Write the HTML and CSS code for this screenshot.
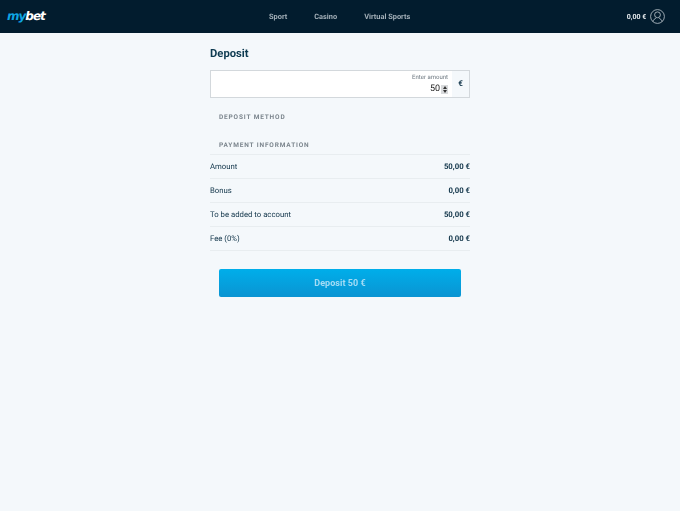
FILE: index.html
```html
<!DOCTYPE html>
<html lang="en">
<head>
<meta charset="UTF-8" />
<meta name="viewport" content="width=device-width, initial-scale=1.0" />
<title>mybet - Deposit</title>
<link rel="stylesheet" href="styles.css">
</head>
<body>
    <header class="topbar">
        <div class="logo"><span class="logo-my">my</span><span class="logo-bet">bet</span></div>
        <nav class="nav">
            <a>Sport</a>
            <a>Casino</a>
            <a>Virtual Sports</a>
        </nav>
        <div class="account">
            <span class="balance">0,00 €</span>
            <svg class="user-icon" width="15" height="15" viewBox="0 0 15 15" fill="none" stroke="#c3ccd2" stroke-width="0.8">
                <circle cx="7.5" cy="7.5" r="6.9"/>
                <circle cx="7.5" cy="5.8" r="2.9"/>
                <path d="M2.9 12.6c.5-2 2-3 3.3-3.5M12.1 12.6c-.5-2-2-3-3.3-3.5"/>
            </svg>
        </div>
    </header>

    <main class="deposit">
        <h1>Deposit</h1>
        <div class="amount-box">
            <div class="amount-field">
                <label>Enter amount</label>
                <div class="amount-value">50<span class="spinner"><i class="up"></i><i class="down"></i></span></div>
            </div>
            <div class="currency">€</div>
        </div>

        <h2 class="section-method">Deposit method</h2>
        <h2 class="section-info">Payment information</h2>

        <div class="rows">
            <div class="row"><span>Amount</span><b>50,00 €</b></div>
            <div class="row"><span>Bonus</span><b>0,00 €</b></div>
            <div class="row"><span>To be added to account</span><b>50,00 €</b></div>
            <div class="row"><span>Fee (0%)</span><b>0,00 €</b></div>
        </div>

        <button class="deposit-btn">Deposit 50 €</button>
    </main>
</body>
</html>
```
FILE: styles.css
```css
body {
    margin: 0;
    min-height: 511px;
    font-family: Roboto, "Liberation Sans", sans-serif;
    text-rendering: geometricPrecision;
    background: #f4f8fb;
    color: #0f3348;
}
.topbar {
    height: 33px;
    background: #021c2e;
    display: grid;
    grid-template-columns: 1fr auto 1fr;
    align-items: center;
    padding: 0 15px;
}
.logo {
    font-family: "DejaVu Sans", sans-serif;
    font-size: 12px;
    font-weight: bold;
    font-style: italic;
    letter-spacing: -1px;
    margin: -2px 0 0 -8px;
}
.logo-my {
    color: #0ea5e3;
}
.logo-bet {
    color: #fff;
}
.nav {
    display: flex;
    gap: 27px;
    font-size: 7.4px;
    font-weight: 700;
    color: #a3afb8;
    will-change: transform;
}
.account {
    display: flex;
    align-items: center;
    justify-content: flex-end;
    gap: 4px;
    will-change: transform;
}
.balance {
    font-size: 7px;
    font-weight: 700;
    color: #e6ebee;
}
.deposit {
    width: 260px;
    margin: 0 auto;
    will-change: transform;
}
h1 {
    font-size: 11.25px;
    font-weight: 700;
    color: #0d3a50;
    margin: 0;
    padding-top: 14px;
    line-height: 14px;
}
.amount-box {
    display: flex;
    height: 26px;
    margin-top: 9px;
    background: #fff;
    border: 1px solid #d3d8dc;
}
.amount-field {
    flex: 1;
    text-align: right;
    padding: 3px 4px 0 0;
}
.amount-field label {
    display: block;
    font-size: 6px;
    line-height: 8px;
    color: #6d7880;
}
.amount-value {
    display: flex;
    justify-content: flex-end;
    align-items: center;
    font-size: 9px;
    line-height: 11px;
    color: #1a1a1a;
    margin-top: 2px;
}
.spinner {
    width: 7px;
    height: 9px;
    margin-left: 1px;
    background: #d8dadc;
    display: flex;
    flex-direction: column;
    align-items: center;
    justify-content: center;
    gap: 1px;
}
.spinner i {
    width: 0;
    height: 0;
    border-left: 2px solid transparent;
    border-right: 2px solid transparent;
}
.spinner .up {
    border-bottom: 3px solid #333;
}
.spinner .down {
    border-top: 3px solid #333;
}
.currency {
    width: 17px;
    background: #f4f8fb;
    font-size: 8px;
    font-weight: 700;
    text-align: center;
    line-height: 26px;
}
h2 {
    font-size: 6.5px;
    font-weight: 700;
    letter-spacing: 0.85px;
    text-transform: uppercase;
    color: #7b858d;
    margin: 0;
    padding-left: 9px;
    line-height: 8px;
}
.section-method {
    margin-top: 15px;
}
.section-info {
    margin-top: 20px;
    padding-bottom: 5px;
    border-bottom: 1px solid #e8edf0;
}
.row {
    display: flex;
    justify-content: space-between;
    align-items: center;
    height: 23px;
    border-bottom: 1px solid #e8edf0;
    font-size: 7.75px;
}
.row b {
    font-weight: 700;
}
.deposit-btn {
    display: block;
    width: 242px;
    height: 28px;
    margin: 18px auto 0;
    border: none;
    border-radius: 2px;
    background: linear-gradient(#00aeea, #0a94d2);
    color: #a5dcf5;
    font-family: inherit;
    font-size: 9px;
    font-weight: 700;
    letter-spacing: 0.05px;
}
```
